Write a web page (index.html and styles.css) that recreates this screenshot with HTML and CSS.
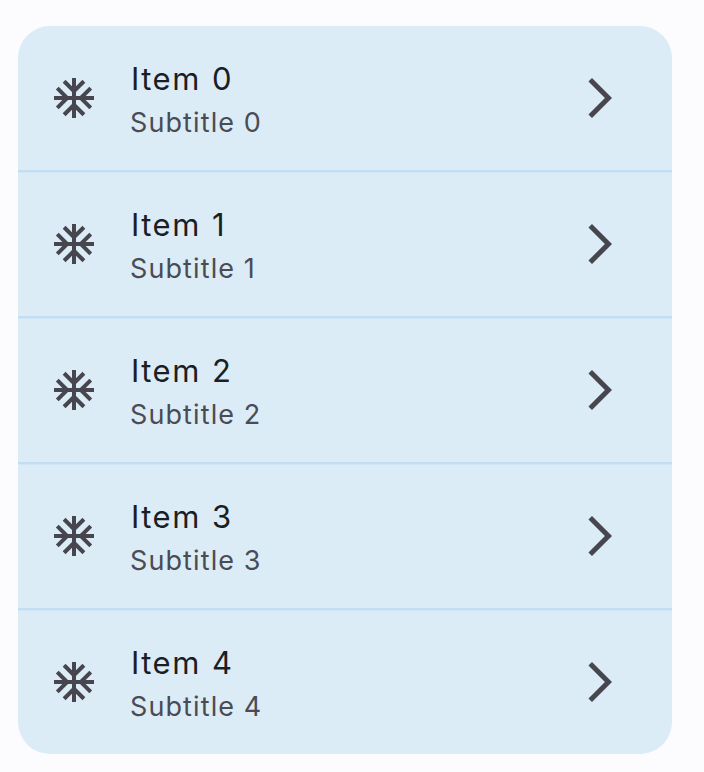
FILE: index.html
```html
<!DOCTYPE html>
<html lang="en">
<head>
<meta charset="utf-8">
<title>Items</title>
<link rel="stylesheet" href="styles.css">
</head>
<body>
<svg class="defs" width="0" height="0">
  <symbol id="snow" viewBox="0 0 24 24"><path d="M22 11h-4.17l3.24-3.24-1.41-1.42L15 11h-2V9l4.66-4.66-1.42-1.41L13 6.17V2h-2v4.17L7.76 2.93 6.34 4.34 11 9v2H9L4.34 6.34 2.93 7.76 6.17 11H2v2h4.17l-3.24 3.24 1.41 1.42L9 13h2v2l-4.66 4.66 1.42 1.41L11 17.83V22h2v-4.17l3.24 3.24 1.42-1.41L13 15v-2h2l4.66 4.66 1.41-1.42L17.83 13H22z"/></symbol>
  <symbol id="chevron" viewBox="0 0 24 24"><path d="M6.23 20.23 8 22l10-10L8 2 6.23 3.77 14.46 12z"/></symbol>
</svg>
<ul class="list">
  <li class="item"><svg class="icon"><use href="#snow"/></svg><div class="text"><div class="title">Item 0</div><div class="subtitle">Subtitle 0</div></div><svg class="chevron"><use href="#chevron"/></svg></li>
  <li class="item"><svg class="icon"><use href="#snow"/></svg><div class="text"><div class="title">Item 1</div><div class="subtitle">Subtitle 1</div></div><svg class="chevron"><use href="#chevron"/></svg></li>
  <li class="item"><svg class="icon"><use href="#snow"/></svg><div class="text"><div class="title">Item 2</div><div class="subtitle">Subtitle 2</div></div><svg class="chevron"><use href="#chevron"/></svg></li>
  <li class="item"><svg class="icon"><use href="#snow"/></svg><div class="text"><div class="title">Item 3</div><div class="subtitle">Subtitle 3</div></div><svg class="chevron"><use href="#chevron"/></svg></li>
  <li class="item"><svg class="icon"><use href="#snow"/></svg><div class="text"><div class="title">Item 4</div><div class="subtitle">Subtitle 4</div></div><svg class="chevron"><use href="#chevron"/></svg></li>
</ul>
</body>
</html>
```
FILE: styles.css
```css
* { box-sizing: border-box; }
body { margin: 0; background: #fcfcff; font-family: Inter, sans-serif; overflow: hidden; }
.defs { display: block; }
.list { list-style: none; margin: 26px 32px 0 18px; padding: 0; border-radius: 32px; background: #dbecf6; overflow: hidden; }
.item { display: flex; align-items: center; height: 146px; padding: 0 48px 0 32px; border-bottom: 2px solid #c1def3; box-shadow: 0 1px #d0e6f5; }
.item:last-child { height: 144px; border-bottom: 0; box-shadow: none; }
.icon { width: 48px; height: 48px; fill: #47464f; }
.text { flex: 1; margin-left: 33px; padding-top: 6px; }
.title { font-size: 31px; font-weight: 400; line-height: 44px; letter-spacing: 1.5px; word-spacing: 1px; color: #1b1f23; }
.subtitle { margin-left: -1px; font-size: 27px; font-weight: 400; line-height: 44px; letter-spacing: 1.1px; word-spacing: 0; color: #4b4b55; }
.chevron { width: 48px; height: 48px; fill: #47464f; }
```
